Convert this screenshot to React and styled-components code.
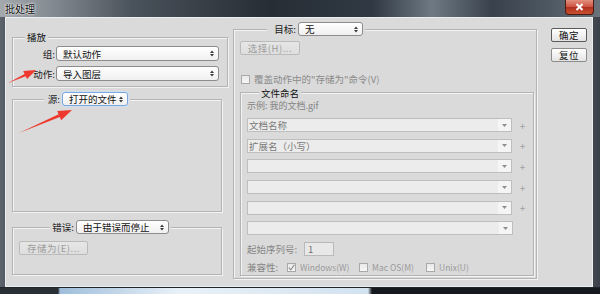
import React from 'react'
import styled, { createGlobalStyle } from 'styled-components'

const GlobalStyle = createGlobalStyle`
  html, body {
    margin: 0;
    padding: 0;
  }
  body {
    width: 600px;
    height: 294px;
    overflow: hidden;
    background: #2b3138;
    font-family: "Noto Sans CJK SC", "Noto Sans", sans-serif;
    font-size: 9.5px;
    color: #1b1b1b;
  }
`

const Window = styled.div`
  position: relative;
  display: flex;
  flex-direction: column;
  width: 600px;
  height: 294px;
`

const TitleBar = styled.div`
  height: 18px;
  display: flex;
  justify-content: space-between;
  align-items: flex-start;
  padding: 0 6px 0 5px;
  background: linear-gradient(
    90deg,
    #a4a9ad 0%,
    #868d94 8%,
    #4a525b 22%,
    #262d35 45%,
    #303943 62%,
    #6e7984 72%,
    #39424c 82%,
    #4f5963 92%,
    #6a737c 100%
  );
`

const Title = styled.span`
  font-size: 10px;
  line-height: 17px;
  color: #101010;
  text-shadow: 0 0 3px #fff, 0 0 2px #fff;
`

const CloseButton = styled.div`
  box-sizing: border-box;
  width: 29px;
  height: 15px;
  border: 1px solid #4d1a12;
  border-top: none;
  border-radius: 0 0 4px 4px;
  background: linear-gradient(#e3907f, #cc5341 48%, #b0301f 52%, #c9502f);
  display: flex;
  align-items: center;
  justify-content: center;
`

const Frame = styled.div`
  height: 270px;
  padding: 0 7px 0 5px;
  background: linear-gradient(90deg, #5d646b, #474e56 2%, #474e56 98%, #3a4148);
`

const Content = styled.div`
  box-sizing: border-box;
  height: 270px;
  border: 1px solid #eceef0;
  background: #dadada;
  display: flex;
  padding-left: 6px;
`

const BottomStrip = styled.div`
  height: 6px;
  background: linear-gradient(
    90deg,
    #2a2f35 0,
    #2a2f35 58px,
    #9fbedb 60px,
    #e9f1f8 180px,
    #d2e2ef 368px,
    #16191d 372px,
    #16191d 100%
  );
  border-top: 1px solid #1f2429;
`

const LeftColumn = styled.div`
  width: 216px;
  padding-top: 12px;
  display: flex;
  flex-direction: column;
`

const RightColumn = styled.div`
  width: 304px;
  margin-left: 5px;
  padding-top: 4px;
`

const ButtonColumn = styled.div`
  width: 36px;
  margin-left: 14px;
  padding-top: 10px;
  display: flex;
  flex-direction: column;
  gap: 6px;
`

const Group = styled.fieldset`
  box-sizing: border-box;
  margin: ${p => p.$margin || '0'};
  min-width: 0;
  width: ${p => p.$width}px;
  height: ${p => (p.$height ? `${p.$height}px` : 'auto')};
  padding: ${p => p.$pad || '0'};
  border: 1px solid #b4b4b4;
  box-shadow: inset 1px 1px 0 #f3f3f3, 1px 1px 0 #f3f3f3;
`

const Legend = styled.legend`
  display: flex;
  align-items: center;
  height: ${p => p.$height || 14}px;
  padding: 0 2px;
  margin-left: ${p => p.$indent}px;
  background: #dadada;
  color: #111;
`

const Row = styled.div`
  display: flex;
  align-items: center;
  height: 15px;
  margin-top: ${p => p.$top || 0}px;
`

const Label = styled.span`
  width: ${p => p.$width}px;
  text-align: ${p => (p.$left ? 'left' : 'right')};
  color: ${p => (p.$muted ? '#858585' : '#1b1b1b')};
  flex-shrink: 0;
`

const SelectBox = styled.div`
  box-sizing: border-box;
  width: ${p => p.$width}px;
  height: ${p => p.$height || 15}px;
  margin-left: ${p => p.$gap || 0}px;
  display: flex;
  align-items: center;
  justify-content: space-between;
  padding: 0 4px 0 6px;
  border: 1px solid ${p => (p.$focus ? '#7aa6dc' : '#8d8d8d')};
  border-radius: 3px;
  background: linear-gradient(#ffffff, #f0f0f0);
  box-shadow: ${p => (p.$focus ? '0 0 0 1px #cfe0f4' : 'none')};
  color: #111;
`

const PushButton = styled.div`
  box-sizing: border-box;
  width: ${p => p.$width}px;
  height: 14px;
  margin: ${p => p.$margin || '0'};
  border: 1px solid ${p => (p.$disabled ? '#bbbbbb' : p.$primary ? '#5a5a5a' : '#8c8c8c')};
  border-radius: 2px;
  background: ${p => (p.$disabled ? 'linear-gradient(#e6e6e6, #dedede)' : 'linear-gradient(#ffffff, #e4e4e4)')};
  color: ${p => (p.$disabled ? '#9c9c9c' : '#111')};
  display: flex;
  align-items: center;
  justify-content: center;
  letter-spacing: 0.5px;
`

const CheckRow = styled.div`
  display: flex;
  align-items: center;
  height: 12px;
  margin: ${p => p.$margin || '0'};
  color: #8a8a8a;
`

const CheckBox = styled.span`
  box-sizing: border-box;
  width: 9px;
  height: 9px;
  margin-right: 4px;
  flex-shrink: 0;
  border: 1px solid #a9a9a9;
  background: linear-gradient(#e9e9e9, #f7f7f7);
  display: inline-flex;
  align-items: center;
  justify-content: center;
`

const Option = styled.span`
  display: flex;
  align-items: center;
  width: ${p => p.$width}px;
  font-size: 8.5px;
  color: #9a9a9a;
`

const Example = styled.div`
  height: 12px;
  line-height: 12px;
  margin-top: 1px;
  font-size: 9px;
  color: #858585;
`

const NameList = styled.div`
  display: flex;
  flex-direction: column;
  gap: 6.6px;
  margin-top: 6px;
`

const NameRow = styled.div`
  display: flex;
  align-items: center;
  height: 14px;
`

const NameField = styled.div`
  box-sizing: border-box;
  width: 266px;
  height: 14px;
  border: 1px solid #bebebe;
  background: #ececec;
  display: flex;
  align-items: center;
  color: #7a7a7a;
`

const FieldText = styled.span`
  flex: 1;
  padding-left: 1px;
`

const FieldDrop = styled.span`
  width: 13px;
  height: 100%;
  background: #f5f5f5;
  display: flex;
  align-items: center;
  justify-content: center;
`

const Plus = styled.span`
  width: 21px;
  text-align: center;
  color: #a0a0a0;
  font-size: 10px;
`

const SerialInput = styled.div`
  box-sizing: border-box;
  width: 30px;
  height: 14px;
  padding-left: 3px;
  border: 1px solid #b9b9b9;
  background: #e8e8e8;
  color: #6e6e6e;
  display: flex;
  align-items: center;
`

const FieldRow = styled.div`
  display: flex;
  align-items: center;
  height: ${p => p.$height}px;
  margin-top: ${p => p.$top}px;
  color: #858585;
`

const Overlay = styled.svg`
  position: absolute;
  left: 0;
  top: 0;
  pointer-events: none;
`

const UpDown = () => (
  <svg width="4" height="7" viewBox="0 0 4 7">
    <path d="M0 3 L2 0.5 L4 3Z M0 4 L2 6.5 L4 4Z" fill="#3a3a3a" />
  </svg>
)

const DropArrow = () => (
  <svg width="5" height="3" viewBox="0 0 5 3">
    <path d="M0 0 L5 0 L2.5 3Z" fill="#8e8e8e" />
  </svg>
)

const Tick = () => (
  <svg width="7" height="7" viewBox="0 0 7 7">
    <path d="M0.8 3.6 L2.8 5.8 L6.4 0.8" fill="none" stroke="#8a8a8a" strokeWidth="1.1" />
  </svg>
)

const Select = ({ children, ...rest }) => (
  <SelectBox {...rest}>
    <span>{children}</span>
    <UpDown />
  </SelectBox>
)

const nameFields = ['文档名称', '扩展名（小写）', '', '', '', '']

const App = () => (
  <Window>
    <GlobalStyle />
    <TitleBar>
      <Title>批处理</Title>
      <CloseButton>
        <svg width="9" height="8" viewBox="0 0 9 8">
          <path d="M1.5 1 L7.5 7 M7.5 1 L1.5 7" stroke="#fff" strokeWidth="2" />
        </svg>
      </CloseButton>
    </TitleBar>

    <Frame>
      <Content>
        <LeftColumn>
          <Group $width={216} $pad="2px 0 5px 0">
            <Legend $indent={12}>播放</Legend>
            <Row>
              <Label $width={42}>组:</Label>
              <Select $width={163} $gap={1}>默认动作</Select>
            </Row>
            <Row $top={5}>
              <Label $width={42}>动作:</Label>
              <Select $width={163} $gap={1}>导入图层</Select>
            </Row>
          </Group>

          <Group $width={210} $height={120} $margin="5px 0 0 0">
            <Legend $indent={31}>
              <Label $width={14}>源:</Label>
              <Select $width={66} $height={14} $gap={2} $focus>打开的文件</Select>
            </Legend>
          </Group>

          <Group $width={210} $height={55} $margin="8px 0 0 0" $pad="7px 0 0 6px">
            <Legend $indent={31}>
              <Label $width={22}>错误:</Label>
              <Select $width={93} $height={14} $gap={2}>由于错误而停止</Select>
            </Legend>
            <PushButton $width={69} $disabled>存储为(E)...</PushButton>
          </Group>
        </LeftColumn>

        <RightColumn>
          <Group $width={304} $height={257} $pad="0 0 0 6px">
            <Legend $indent={27}>
              <Label $width={27}>目标:</Label>
              <Select $width={65} $height={14} $gap={2}>无</Select>
            </Legend>

            <PushButton $width={60} $disabled $margin="5px 0 0 0">选择(H)...</PushButton>

            <CheckRow $margin="18px 0 0 1px">
              <CheckBox />
              覆盖动作中的"存储为"命令(V)
            </CheckRow>

            <Group $width={294} $height={190} $margin="1px 0 0 0" $pad="0 0 0 6px">
              <Legend $indent={12} $height={13}>文件命名</Legend>
              <Example>示例: 我的文档.gif</Example>

              <NameList>
                {nameFields.map((text, i) => (
                  <NameRow key={i}>
                    <NameField>
                      <FieldText>{text}</FieldText>
                      <FieldDrop>
                        <DropArrow />
                      </FieldDrop>
                    </NameField>
                    {i < nameFields.length - 1 && <Plus>+</Plus>}
                  </NameRow>
                ))}
              </NameList>

              <FieldRow $height={14} $top={7}>
                <Label $width={57} $left $muted>起始序列号:</Label>
                <SerialInput>1</SerialInput>
              </FieldRow>

              <FieldRow $height={12} $top={5}>
                <Label $width={40} $left $muted>兼容性:</Label>
                <Option $width={72}>
                  <CheckBox><Tick /></CheckBox>
                  Windows(W)
                </Option>
                <Option $width={67}>
                  <CheckBox />
                  Mac OS(M)
                </Option>
                <Option $width={60}>
                  <CheckBox />
                  Unix(U)
                </Option>
              </FieldRow>
            </Group>
          </Group>
        </RightColumn>

        <ButtonColumn>
          <PushButton $width={36} $primary>确定</PushButton>
          <PushButton $width={36}>复位</PushButton>
        </ButtonColumn>
      </Content>
    </Frame>
    <BottomStrip />

    <Overlay width="600" height="294" viewBox="0 0 600 294">
      <polygon
        points="8,83 25.7,76.2 27,79.1 36,70 23.2,71 24.6,73.9"
        fill="#ee3a2e"
      />
      <polygon
        points="19,133 59.8,117 61.2,120.2 72,110 57.2,111 58.6,114.2"
        fill="#ee3a2e"
      />
    </Overlay>
  </Window>
)

export default App
